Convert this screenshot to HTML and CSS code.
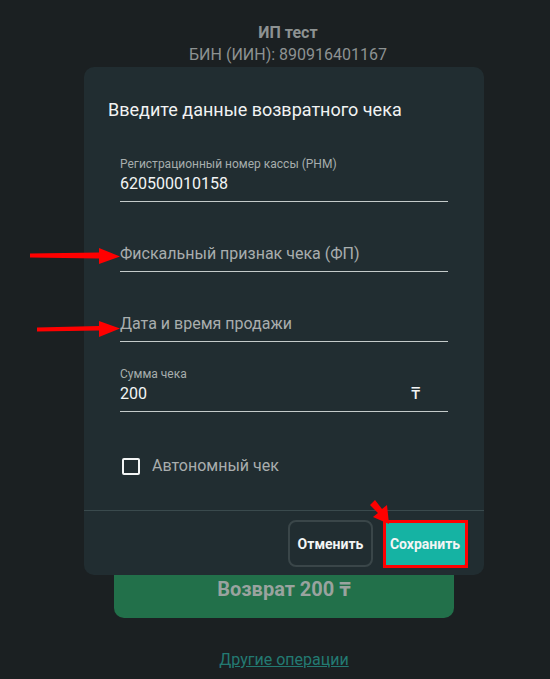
FILE: index.html
```html
<!DOCTYPE html>
<html lang="ru">
<head>
<meta charset="utf-8">
<link rel="stylesheet" href="styles.css">
</head>
<body>
<main class="page">
  <header class="org">
    <div class="org-name">ИП тест</div>
    <div class="org-bin">БИН (ИИН): 890916401167</div>
  </header>
  <div class="refund-btn">Возврат 200 ₸</div>
  <a class="other-link" href="#">Другие операции</a>
</main>

<section class="dialog">
  <h2 class="dialog-title">Введите данные возвратного чека</h2>
  <div class="fields">
    <div class="field">
      <div class="field-label">Регистрационный номер кассы (РНМ)</div>
      <div class="field-value">620500010158</div>
    </div>
    <div class="field">
      <div class="field-placeholder">Фискальный признак чека (ФП)</div>
    </div>
    <div class="field">
      <div class="field-placeholder">Дата и время продажи</div>
    </div>
    <div class="field">
      <div class="field-label">Сумма чека</div>
      <div class="field-value field-row"><span>200</span><span class="currency">₸</span></div>
    </div>
    <label class="check">
      <span class="check-box"></span>
      <span class="check-text">Автономный чек</span>
    </label>
  </div>
  <footer class="dialog-footer">
    <button class="btn btn-cancel">Отменить</button>
    <button class="btn btn-save">Сохранить</button>
  </footer>
</section>

<svg class="annotations" width="550" height="679" viewBox="0 0 550 679">
  <g fill="#ff0000" stroke="none">
    <polygon points="30,253.5 99,252.5 99,248 120,256.5 99,264 99,258.5 30,257.5"/>
    <polygon points="37,327.5 99,326 99,321 120,328.5 99,337 99,330.5 37,331.5"/>
    <polygon points="370,505 375,500 382,509 387,505 389,524 373,517 378,513"/>
  </g>
  <rect x="384.5" y="521.5" width="82" height="45" fill="none" stroke="#ff0000" stroke-width="3"/>
</svg>
</body>
</html>
```

FILE: styles.css
```css
* { box-sizing: border-box; }
html, body { margin: 0; padding: 0; }
body {
  width: 550px;
  height: 679px;
  background: #1b2022;
  font-family: Roboto, "Noto Sans", "Liberation Sans", sans-serif;
  overflow: hidden;
  position: relative;
}
.page {
  width: 340px;
  margin-left: 114px;
  display: flex;
  flex-direction: column;
  align-items: center;
}
.org {
  padding-top: 22px;
  padding-left: 8px;
  text-align: center;
  color: #8d9292;
  font-size: 16px;
  line-height: 22px;
}
.org-name { font-weight: 700; }
.refund-btn {
  margin-top: 492px;
  width: 340px;
  height: 60px;
  border-radius: 10px;
  background: #22704a;
  color: #9aa39f;
  font-size: 20px;
  font-weight: 700;
  display: flex;
  align-items: center;
  justify-content: center;
}
.other-link {
  margin-top: 31px;
  color: #237a72;
  font-size: 16px;
  line-height: 22px;
}
.dialog {
  position: fixed;
  left: 84px;
  top: 67px;
  width: 400px;
  height: 508px;
  background: #212d31;
  border-radius: 10px;
  display: flex;
  flex-direction: column;
}
.dialog-title {
  margin: 0;
  padding: 32px 24px 0 24px;
  font-size: 18px;
  line-height: 22px;
  font-weight: 400;
  color: #f1f3f3;
}
.fields {
  padding: 34px 36px 0 36px;
  display: flex;
  flex-direction: column;
  gap: 23px;
}
.field {
  height: 47px;
  border-bottom: 1px solid #c4cbca;
  display: flex;
  flex-direction: column;
  justify-content: flex-end;
  padding-bottom: 7px;
}
.field-label {
  font-size: 12px;
  line-height: 14px;
  color: #a7adad;
  margin-bottom: 3px;
}
.field-value {
  font-size: 16px;
  line-height: 20px;
  color: #f3f5f5;
}
.field-row {
  display: flex;
  justify-content: space-between;
  padding-right: 28px;
}
.currency { font-weight: 500; }
.field-placeholder {
  font-size: 16px;
  line-height: 20px;
  color: #a9aeae;
}
.check {
  margin-top: 21px;
  display: flex;
  align-items: center;
  gap: 12px;
  padding-left: 2px;
}
.check-box {
  width: 18px;
  height: 17px;
  border: 2px solid #f3f5f5;
  border-radius: 2px;
}
.check-text {
  font-size: 16px;
  line-height: 20px;
  color: #a9aeae;
}
.dialog-footer {
  margin-top: auto;
  height: 65px;
  border-top: 1px solid #3a4a4d;
  display: flex;
  justify-content: flex-end;
  align-items: flex-start;
  gap: 10px;
  padding: 9px 17px 0 0;
}
.btn {
  height: 47px;
  border-radius: 8px;
  font-family: Roboto, "Noto Sans", "Liberation Sans", sans-serif;
  font-size: 14px;
  font-weight: 700;
  color: #f3f5f5;
  padding: 0;
}
.btn-cancel {
  width: 85px;
  background: transparent;
  border: 2px solid #3a4649;
}
.btn-save {
  width: 84px;
  background: #15b3a3;
  border: none;
}
.annotations {
  position: absolute;
  left: 0;
  top: 0;
  pointer-events: none;
}
```
